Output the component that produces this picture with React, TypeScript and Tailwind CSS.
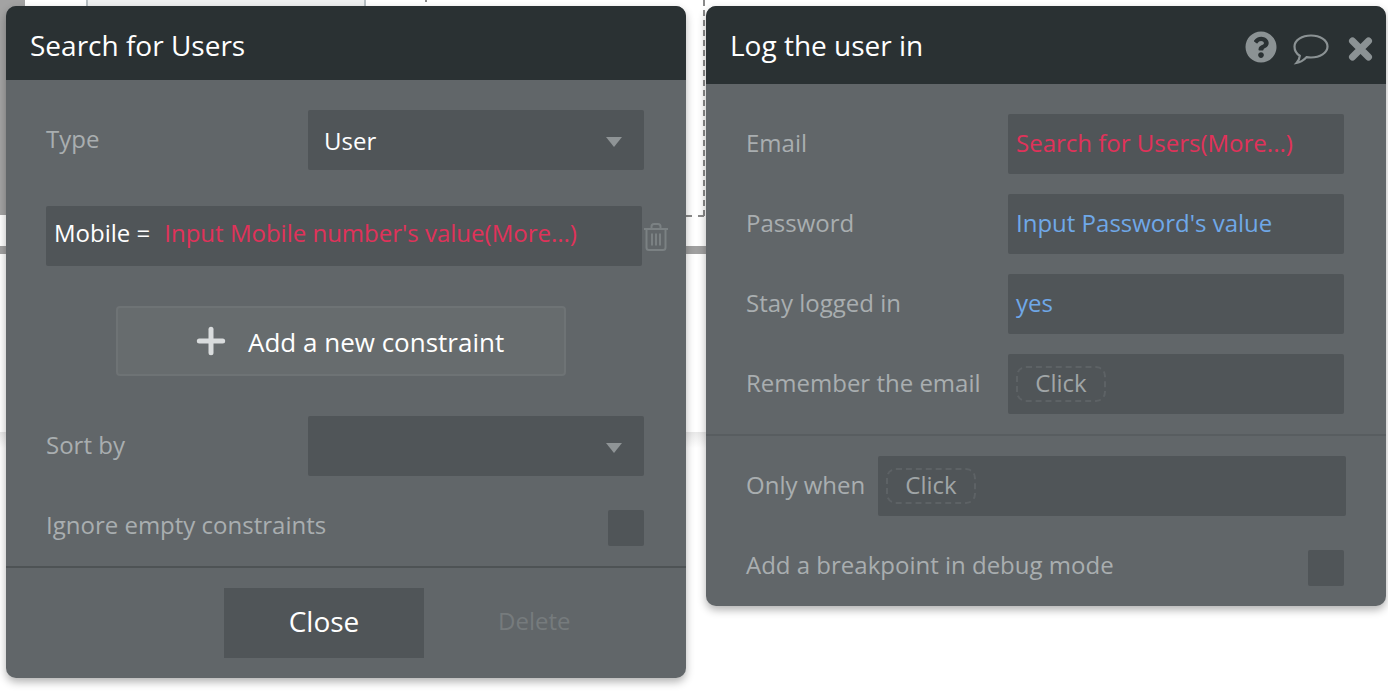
import { FaQuestionCircle } from "react-icons/fa";
import { Plus } from "lucide-react";

const Caret = () => (
  <svg width="18" height="10" viewBox="0 0 18 10" className="shrink-0 mt-1">
    <path d="M1 0h16L9 10z" fill="#8f9496" />
  </svg>
);

const Trash = () => (
  <svg width="26" height="28" viewBox="0 0 26 28" fill="none" stroke="#7b8183" strokeWidth="2" className="shrink-0">
    <path d="M1 6h24M8.500 6V3.500C8.500 2 9.500 1 11 1h4c1.500 0 2.500 1 2.500 2.500V6" />
    <path d="M3.500 6v18.500c0 1.500 1 2.500 2.500 2.500h14c1.500 0 2.500-1 2.500-2.500V6" />
    <path d="M9 10.500v12M13 10.500v12M17 10.500v12" />
  </svg>
);

const Bubble = () => (
  <svg width="36" height="31" viewBox="0 0 36 31" fill="none" stroke="#8b9294" strokeWidth="2.200">
    <path d="M18 1.500c9 0 16.500 4.700 16.500 11s-7.500 11-16.500 11c-1.500 0-3-.1-4.300-.4C11 26 8 28.500 3.500 29c1.700-1.800 3-3.800 3.300-7.200C3.500 19.800 1.500 16.400 1.500 12.500c0-6.300 7.500-11 16.500-11z" />
  </svg>
);

const CloseX = () => (
  <svg width="25" height="24" viewBox="0 0 25 24" fill="none" stroke="#8b9294" strokeWidth="7" strokeLinecap="round">
    <path d="M4.500 4l16 16M20.500 4l-16 16" />
  </svg>
);

const Field = ({ children, className }: { children: React.ReactNode; className: string }) => (
  <div className={`flex items-center h-[60px] bg-[#505558] rounded-[2px] text-[24px] ${className}`}>{children}</div>
);

const ClickPill = () => (
  <span className="flex items-center justify-center w-[90px] h-[36px] pb-[2px] rounded-[10px] border-2 border-dashed border-[#5d6265] text-[#a0a5a7]">
    Click
  </span>
);

const Check = () => <div className="w-9 h-9 bg-[#505558] rounded-[2px]" />;

const SearchPanel = () => (
  <div className="w-[680px] h-[672px] shrink-0 flex flex-col rounded-[10px] overflow-hidden bg-[#616669] shadow-[0_4px_8px_rgba(0,0,0,0.3)]">
    <div className="h-[74px] shrink-0 flex items-center pl-6 pt-1 bg-[#2a3133] text-white text-[28px]">Search for Users</div>
    <div className="flex flex-col pl-10 pr-[42px] pt-[30px]">
      <div className="flex items-center justify-between">
        <span className="text-[24px] text-[#a9aeb0] -mt-[2px]">Type</span>
        <Field className="w-[336px] justify-between pl-4 pr-[21px] text-white">
          <span className="mt-[2px]">User</span>
          <Caret />
        </Field>
      </div>
      <div className="relative mt-9">
        <Field className="w-[596px] pl-2 text-white whitespace-pre">
          <span className="-mt-[6px]">Mobile =</span>
          <span className="-mt-[6px] ml-[14px] text-[#e0325a]">Input Mobile number's value(More...)</span>
        </Field>
        <div className="absolute left-[597px] top-[17px]">
          <Trash />
        </div>
      </div>
      <div className="mt-10 ml-[70px] w-[450px] h-[70px] flex items-center pl-[73px] gap-[17px] bg-[#676c6e] border-2 border-[#6e7375] rounded-[4px] text-white text-[26px]">
        <Plus size={40} strokeWidth={3} color="#d9dcdd" />
        <span className="mt-[2px]">Add a new constraint</span>
      </div>
      <div className="mt-10 flex items-center justify-between">
        <span className="text-[24px] text-[#a9aeb0] -mt-[2px]">Sort by</span>
        <Field className="w-[336px] justify-end pr-[21px]">
          <Caret />
        </Field>
      </div>
      <div className="mt-[34px] flex items-center justify-between">
        <span className="text-[24px] text-[#a9aeb0] -mt-[6px]">Ignore empty constraints</span>
        <Check />
      </div>
    </div>
    <div className="mt-5 h-[2px] bg-[#4e5355]" />
    <div className="flex items-center pl-[218px] pt-5">
      <div className="w-[200px] h-[70px] flex items-center justify-center pb-1 bg-[#505558] text-white text-[28px]">Close</div>
      <span className="ml-[74px] -mt-1 text-[24px] text-[#767b7d]">Delete</span>
    </div>
  </div>
);

const rows = [
  { label: "Email", value: "Search for Users(More...)", color: "text-[#e0325a]" },
  { label: "Password", value: "Input Password's value", color: "text-[#6fa8e8]" },
  { label: "Stay logged in", value: "yes", color: "text-[#6fa8e8]" },
];

const LoginPanel = () => (
  <div className="w-[680px] h-[600px] shrink-0 flex flex-col rounded-[10px] overflow-hidden bg-[#616669] shadow-[0_4px_8px_rgba(0,0,0,0.3)]">
    <div className="h-[78px] shrink-0 flex items-center justify-between pl-6 pr-[13px] bg-[#2a3133] text-white text-[28px]">
      <span>Log the user in</span>
      <div className="flex items-center">
        <FaQuestionCircle size={32} color="#8b9294" className="mt-1" />
        <div className="ml-4 mt-[9px]">
          <Bubble />
        </div>
        <div className="ml-[19px] mt-[7px]">
          <CloseX />
        </div>
      </div>
    </div>
    <div className="flex flex-col gap-5 pl-10 pr-[42px] pt-[30px]">
      {rows.map((r) => (
        <div key={r.label} className="flex items-center justify-between">
          <span className="text-[24px] text-[#a9aeb0] -mt-[2px]">{r.label}</span>
          <Field className={`w-[336px] pl-2 ${r.color}`}>
            <span className="-mt-[2px]">{r.value}</span>
          </Field>
        </div>
      ))}
      <div className="flex items-center justify-between">
        <span className="text-[24px] text-[#a9aeb0] -mt-[2px]">Remember the email</span>
        <Field className="w-[336px] pl-2">
          <ClickPill />
        </Field>
      </div>
    </div>
    <div className="mt-5 h-[2px] bg-[#585d60]" />
    <div className="flex items-center justify-between pl-10 pr-10 mt-5">
      <span className="text-[24px] text-[#a9aeb0] -mt-[2px]">Only when</span>
      <Field className="w-[468px] pl-2">
        <ClickPill />
      </Field>
    </div>
    <div className="flex items-center justify-between pl-10 pr-[42px] mt-[34px]">
      <span className="text-[24px] text-[#a9aeb0] -mt-[6px]">Add a breakpoint in debug mode</span>
      <Check />
    </div>
  </div>
);

export default function App() {
  return (
    <div className="relative w-[1388px] h-[692px] overflow-hidden bg-white font-['Open_Sans',sans-serif]">
      {/* editor canvas showing behind the two panels */}
      <div className="absolute left-0 top-0 w-[25px] h-[215px] bg-[#a3a3a3]" />
      <div className="absolute left-[86px] top-0 w-[280px] h-[10px] bg-[#eef0f0] border-x-2 border-[#b8c0c4]" />
      <div className="absolute left-0 top-[246px] w-[720px] h-2 bg-[#a0a0a0]" />
      <div className="absolute left-[425px] top-0 w-[2px] h-[2px] bg-[#888]" />
      <div className="absolute left-[686px] top-[215px] w-[18px] border-t-2 border-dashed border-[#8a8a8a]" />
      <div className="absolute left-[703px] top-0 h-[216px] border-l-2 border-dashed border-[#8a8a8a]" />
      <div className="absolute left-0 top-[432px] w-[720px] h-[16px] bg-gradient-to-b from-[#e8e8e8] to-white" />
      <div className="relative flex items-start gap-5 pl-[6px] pt-[6px]">
        <SearchPanel />
        <LoginPanel />
      </div>
    </div>
  );
}
